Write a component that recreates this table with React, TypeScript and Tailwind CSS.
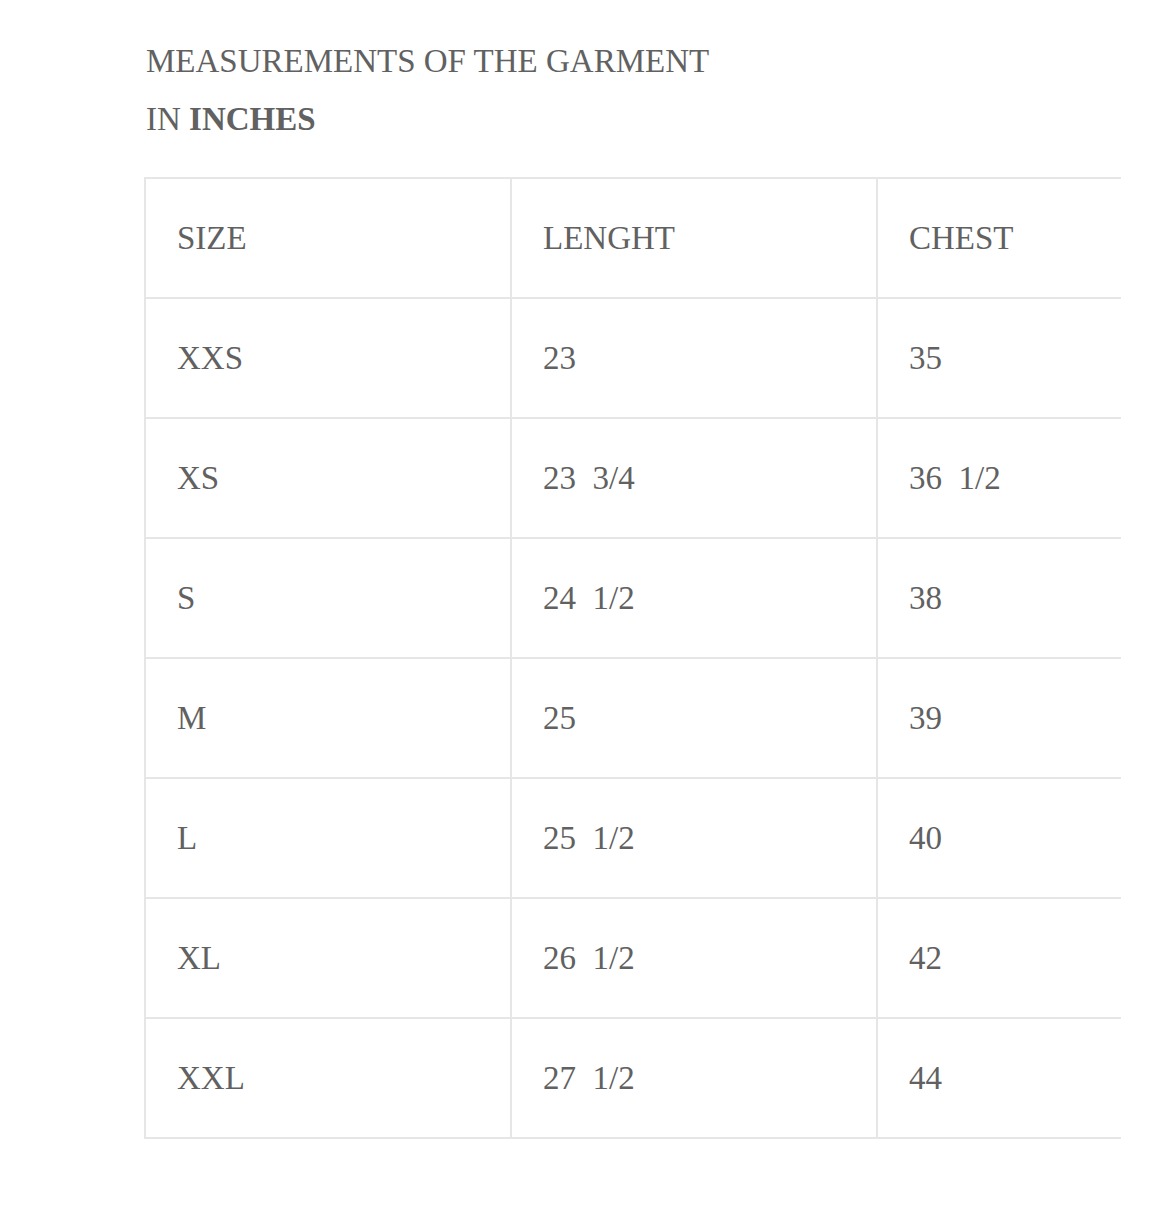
import React from "react";

const rows: [string, string, string][] = [
  ["SIZE", "LENGHT", "CHEST"],
  ["XXS", "23", "35"],
  ["XS", "23  3/4", "36  1/2"],
  ["S", "24  1/2", "38"],
  ["M", "25", "39"],
  ["L", "25  1/2", "40"],
  ["XL", "26  1/2", "42"],
  ["XXL", "27  1/2", "44"],
];

export default function App() {
  return (
    <div
      className="w-[1156px] h-[1214px] bg-white text-[#616161] text-[33px]"
      style={{ fontFamily: '"Liberation Serif", "Times New Roman", serif' }}
    >
      <div className="pt-[32px] pl-[146px] leading-[58px]">
        <div>MEASUREMENTS OF THE GARMENT</div>
        <div>
          IN <span className="font-bold">INCHES</span>
        </div>
      </div>
      <div className="mt-[29px] ml-[144px] w-[977px] overflow-hidden">
        <div className="w-[1098px] grid grid-cols-[366px_366px_366px] border-b-2 border-r-2 border-[#e6e6e6]">
          {rows.map((r, i) =>
            r.map((c, j) => (
              <div
                key={`${i}-${j}`}
                className="h-[120px] border-l-2 border-t-2 border-[#e6e6e6] pl-[31px] pt-[2px] flex items-center whitespace-pre"
              >
                {c}
              </div>
            ))
          )}
        </div>
      </div>
    </div>
  );
}
